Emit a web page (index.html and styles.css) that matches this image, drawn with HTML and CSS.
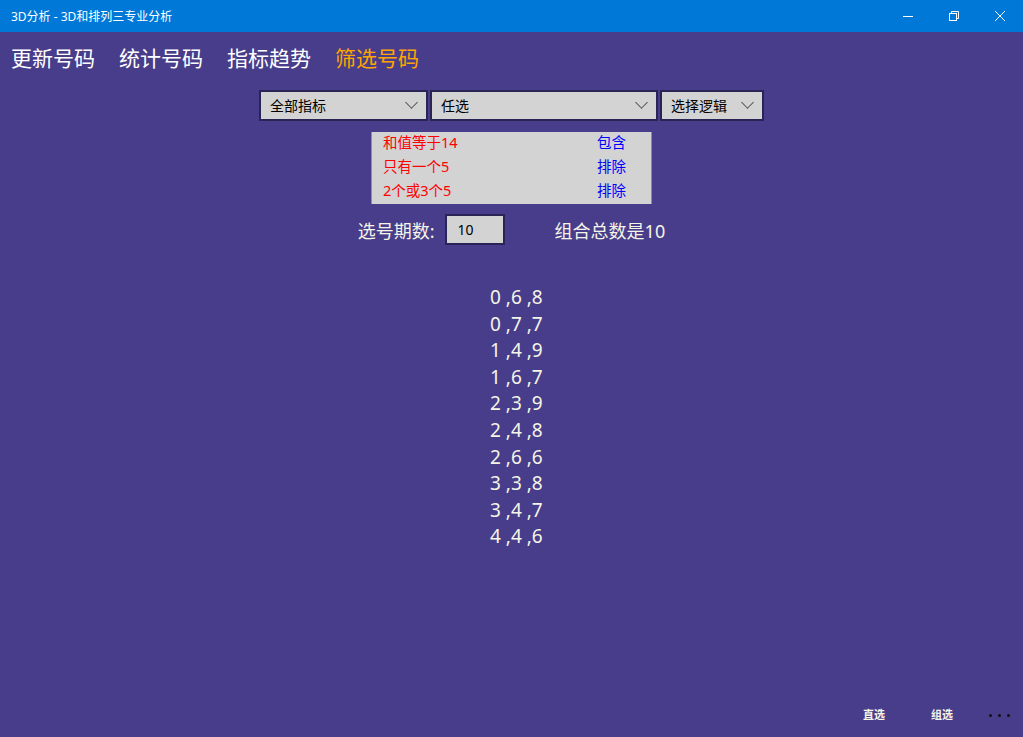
FILE: index.html
```html
<!DOCTYPE html>
<html lang="zh-CN">
<head>
    <meta charset="UTF-8">
    <meta name="viewport" content="width=device-width, initial-scale=1.0">
    <title>3D分析 - 3D和排列三专业分析</title>
    <link rel="stylesheet" href="styles.css">
</head>
<body>
    <div class="window">
        <div class="titlebar">
            <span class="title">3D分析 - 3D和排列三专业分析</span>
            <div class="controls">
                <span class="ctl">
                    <svg width="10" height="10" viewBox="0 0 10 10"><path d="M0 5.5h10" stroke="#fff" stroke-width="1"/></svg>
                </span>
                <span class="ctl">
                    <svg width="10" height="10" viewBox="0 0 10 10" fill="none" stroke="#fff" stroke-width="1">
                        <rect x="0.5" y="2.5" width="7" height="7"/>
                        <path d="M2.5 2.5v-2h7v7h-2"/>
                    </svg>
                </span>
                <span class="ctl">
                    <svg width="10" height="10" viewBox="0 0 10 10"><path d="M0 0l10 10M10 0L0 10" stroke="#fff" stroke-width="1"/></svg>
                </span>
            </div>
        </div>

        <nav class="tabs">
            <a class="tab">更新号码</a>
            <a class="tab">统计号码</a>
            <a class="tab">指标趋势</a>
            <a class="tab active">筛选号码</a>
        </nav>

        <div class="pickers">
            <div class="combo w-index"><span>全部指标</span><i class="chev"></i></div>
            <div class="combo w-range"><span>任选</span><i class="chev"></i></div>
            <div class="combo w-logic"><span>选择逻辑</span><i class="chev"></i></div>
        </div>

        <ul class="rules">
            <li><span class="cond">和值等于14</span><span class="mode">包含</span></li>
            <li><span class="cond">只有一个5</span><span class="mode">排除</span></li>
            <li><span class="cond">2个或3个5</span><span class="mode">排除</span></li>
        </ul>

        <div class="period">
            <label>选号期数:</label>
            <div class="num-box">10</div>
            <span class="total">组合总数是10</span>
        </div>

        <div class="results" id="results"></div>

        <footer class="appbar">
            <span class="cmd">直选</span>
            <span class="cmd">组选</span>
            <span class="more"><i></i><i></i><i></i></span>
        </footer>
    </div>

    <script>
        let combos = [
            [0, 6, 8], [0, 7, 7], [1, 4, 9], [1, 6, 7], [2, 3, 9],
            [2, 4, 8], [2, 6, 6], [3, 3, 8], [3, 4, 7], [4, 4, 6]
        ];
        let box = document.getElementById("results");
        combos.forEach(function (c) {
            let row = document.createElement("div");
            row.innerText = c.join(" ,");
            box.appendChild(row);
        });
    </script>
</body>
</html>
```

FILE: styles.css
```css
body {
    margin: 0;
    padding: 0;
    font-family: "Noto Sans", "Noto Sans CJK SC", sans-serif;
    background-color: #483d8b;
}

.window {
    width: 1023px;
    height: 737px;
    display: flex;
    flex-direction: column;
    overflow: hidden;
}

.titlebar {
    height: 32px;
    background-color: #0078d7;
    color: white;
    display: flex;
    align-items: center;
    justify-content: space-between;
    flex-shrink: 0;
}

.title {
    font-size: 12px;
    padding-left: 11px;
}

.controls {
    display: flex;
}

.ctl {
    width: 46px;
    height: 32px;
    display: flex;
    align-items: center;
    justify-content: center;
}

.tabs {
    display: flex;
    gap: 24px;
    padding: 9px 11px 0;
    height: 42px;
    box-sizing: border-box;
}

.tab {
    font-size: 21px;
    color: white;
    line-height: 34px;
}

.tab.active {
    color: #ffa500;
}

.pickers {
    display: flex;
    justify-content: center;
    gap: 2px;
    margin-top: 16px;
    margin-left: 0;
}

.combo {
    height: 31px;
    box-sizing: border-box;
    border: 2px solid #2a2355;
    background: #d3d3d3;
    display: flex;
    align-items: center;
    justify-content: space-between;
    padding: 0 8px 2px 9px;
    font-size: 14px;
    color: black;
}

.w-index { width: 169px; }
.w-range { width: 228px; }
.w-logic { width: 104px; }

.chev {
    width: 8px;
    height: 8px;
    border-right: 1px solid #555;
    border-bottom: 1px solid #555;
    transform: rotate(45deg);
    margin-top: -4px;
    margin-right: 2px;
}

.rules {
    list-style: none;
    margin: 11px auto 0;
    padding: 0;
    width: 280px;
    background: #d3d3d3;
    transform: translateX(-0.5px);
}

.rules li {
    display: flex;
    height: 24px;
    align-items: center;
    font-size: 14.5px;
    padding-left: 12px;
    padding-bottom: 6px;
    box-sizing: border-box;
}

.cond {
    color: red;
    width: 214px;
}

.mode {
    color: blue;
}

.period {
    display: flex;
    align-items: center;
    justify-content: center;
    margin-top: 10px;
    height: 31px;
    color: #f5f5e6;
    font-size: 18px;
}

.period label {
    margin-right: 10px;
}

.num-box {
    width: 60px;
    height: 31px;
    box-sizing: border-box;
    border: 2px solid #2a2355;
    background: #d3d3d3;
    color: black;
    font-size: 14px;
    display: flex;
    align-items: center;
    padding-left: 11px;
}

.total {
    margin-left: 50px;
}

.results {
    margin-top: 39px;
    padding-left: 490px;
    color: #f5f5e6;
    font-size: 19px;
    line-height: 26.6px;
}

.appbar {
    margin-top: auto;
    height: 40px;
    display: flex;
    align-items: center;
    justify-content: flex-end;
    padding-right: 1px;
    padding-bottom: 6px;
    box-sizing: border-box;
}

.cmd {
    width: 68px;
    text-align: center;
    color: #f5f5e6;
    font-size: 11px;
    font-weight: bold;
}

.more {
    width: 46px;
    display: flex;
    justify-content: center;
    gap: 6px;
    margin-top: 2px;
}

.more i {
    width: 3px;
    height: 3px;
    border-radius: 50%;
    background: #111;
}
```
